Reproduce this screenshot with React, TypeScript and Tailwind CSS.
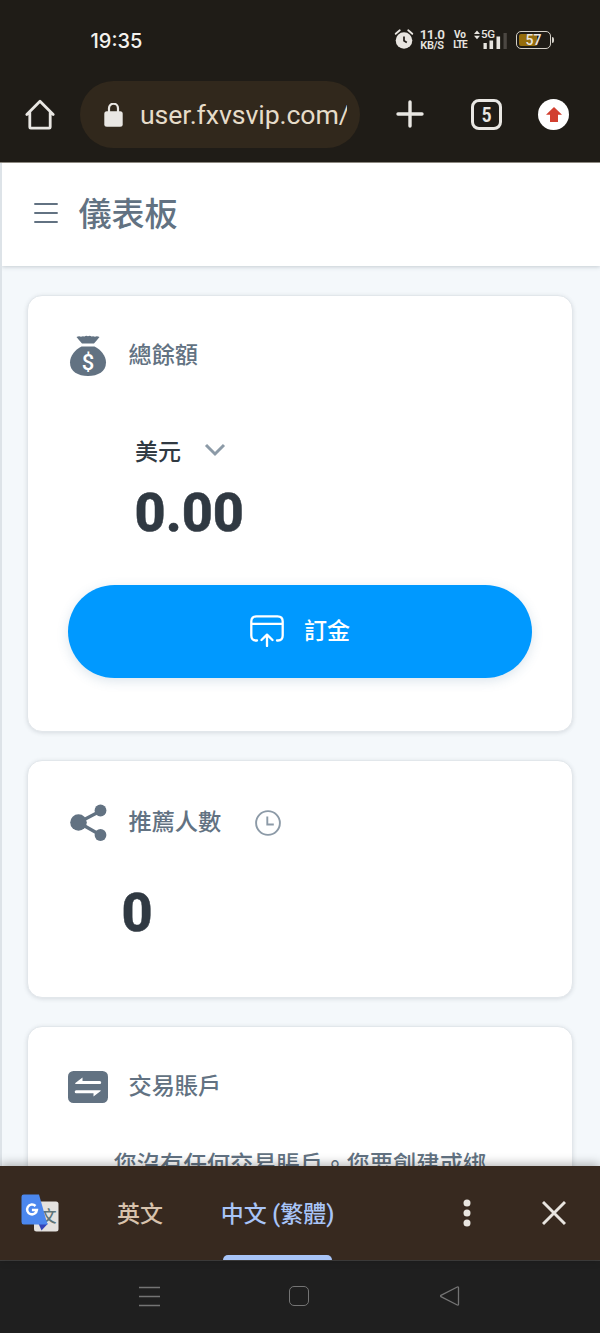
import type { ReactNode } from "react";

const cjk = "font-['Roboto','Noto_Sans_CJK_TC',sans-serif]";

function StatusBar() {
  return (
    <div className="flex h-20 items-center pl-[90.5px] pr-[46px] pt-px font-['Inter',sans-serif] text-[#f4f2ee]">
      <span className="w-[52px] whitespace-nowrap text-[20px] font-medium leading-6">19:35</span>
      <div className="ml-auto flex h-8 items-center text-[#e8e5e0]">
        <svg className="mb-[3px] mr-[6px]" width="20" height="22" viewBox="0 0 20 22" fill="none">
          <circle cx="10" cy="12.5" r="8.3" fill="currentColor" />
          <path d="M1.700 5.800 5.800 2.300M18.300 5.800 14.200 2.300" stroke="currentColor" strokeWidth="1.800" strokeLinecap="round" />
          <path d="M10 8.500v4.200l2.800 1.800" stroke="#211d18" strokeWidth="1.700" />
        </svg>
        <div className="mb-px flex w-[24px] flex-col items-center whitespace-nowrap font-['Roboto',sans-serif] font-semibold">
          <span className="text-[13.500px] leading-[11px] tracking-[-0.600px]">11.0</span>
          <span className="text-[11px] leading-[11px] tracking-[-0.400px]">KB/S</span>
        </div>
        <div className="mb-px ml-[9px] flex w-[14px] flex-col items-center font-['Roboto',sans-serif] font-bold">
          <span className="text-[10px] leading-[10px]">Vo</span>
          <span className="text-[10px] leading-[10px] tracking-[-0.900px]">LTE</span>
        </div>
        <div className="relative mb-px ml-[7px] h-[20px] w-[34px]">
          <svg width="34" height="20" viewBox="0 0 34 20" fill="currentColor">
            <path d="m0 4 3-3.500 3 3.500zM0 5.800h6L3 9.300z" />
            <path d="M9.500 13h3.300v6H9.500zM15.500 10.500h3.600V19h-3.600zM22.500 6.500h3.600V19h-3.600z" />
            <path d="M29.500 3h3.300v16h-3.300z" fill="#4b4742" />
          </svg>
          <span className="absolute left-[7px] top-0 font-['Roboto',sans-serif] text-[11.500px] font-medium leading-[9px] tracking-[-0.400px]">5G</span>
        </div>
        <div className="mb-px ml-[8px] flex items-center">
          <div className="relative flex h-[18px] w-[35px] items-center justify-center overflow-hidden rounded-[5px] border-[1.500px] border-[#d4d0c8]">
            <div className="absolute left-[2px] top-[2px] h-[12px] w-[18px] rounded-[2px] bg-[#946c0c]" />
            <span className="relative font-['Roboto',sans-serif] text-[14px] font-medium leading-[14px]">57</span>
          </div>
          <div className="ml-px h-[6px] w-[2px] rounded-r bg-[#d4d0c8]" />
        </div>
      </div>
    </div>
  );
}

function Toolbar() {
  return (
    <div className="flex h-[82px] items-start pt-px text-[#e9e7e3]">
      <svg className="ml-6 mt-[18px]" width="32" height="32" viewBox="0 0 32 32" fill="none" stroke="currentColor" strokeWidth="2.800" strokeLinejoin="round" strokeLinecap="round">
        <path d="M2.800 15.500 16 2.300l13.200 13.200M5.800 13.500v14.700q0 1 1 1h18.400q1 0 1-1V13.500" />
      </svg>
      <div className="ml-6 flex h-[67px] w-[280px] items-center rounded-full bg-[#31281c] pl-6">
        <svg width="19" height="24" viewBox="0 0 19 24" fill="none">
          <rect x="0.3" y="8.3" width="18.4" height="15.4" rx="2.5" fill="currentColor" />
          <path d="M5 9V5.200a4.500 4.500 0 0 1 9 0V9" stroke="currentColor" strokeWidth="2.200" />
        </svg>
        <span className="ml-[17px] w-[207px] overflow-hidden whitespace-nowrap font-['Roboto',sans-serif] text-[26.700px] leading-9 tracking-[-0.100px] text-[#e6dcc9]">user.fxvsvip.com/</span>
      </div>
      <svg className="ml-[35px] mt-[19px]" width="30" height="28" viewBox="-1 0 30 28" stroke="currentColor" strokeWidth="3.400" strokeLinecap="round">
        <path d="M14 2v24M2 14h24" />
      </svg>
      <div className="ml-[46px] mt-[18px] flex h-[31px] w-[31px] items-center justify-center rounded-[8px] border-[3px] border-current font-['Roboto',sans-serif] text-[20px] font-bold leading-none">
        <span className="scale-x-[.85]">5</span>
      </div>
      <div className="ml-[36px] mt-[18px] flex h-[31px] w-[31px] items-center justify-center rounded-full bg-white">
        <svg width="16" height="15" viewBox="0 0 16 15" fill="#d23f2f">
          <path d="m8 0 8 7.800h-4V15H4V7.800H0z" />
        </svg>
      </div>
    </div>
  );
}

function CardTitle({ icon, children }: { icon: ReactNode; children: ReactNode }) {
  return (
    <div className="flex h-[42px] items-center">
      <div className="flex w-10 justify-center">{icon}</div>
      <span className="mb-[3px] ml-[20.500px] text-[23.200px] font-medium leading-8">{children}</span>
    </div>
  );
}

function Card({ className, children }: { className: string; children: ReactNode }) {
  return (
    <section className={"rounded-[15px] border border-[#e2e7eb] bg-white px-10 shadow-[0_1px_4px_rgba(60,75,90,0.16)] " + className}>
      {children}
    </section>
  );
}

function MoneyBag() {
  return (
    <svg width="38" height="42" viewBox="0 0 38 42" fill="currentColor">
      <path d="M7.500 2q2.500-1.200 4.500-.300 1.500-1 3.500-.200 1.700-1.300 3.500-.200 1.800-1.100 3.500.200 2-.800 3.500.200 2-.900 4.500.300-2.200 2.800-5.500 6.500H13Q9.700 4.800 7.500 2z" />
      <path d="M12.500 11.500h13c6 3 11.500 9 11.500 16C37 36.500 29 41 19 41S1 36.500 1 27.500c0-7 5.500-13 11.500-16z" />
      <text x="19" y="34.500" textAnchor="middle" fontFamily="Roboto" fontWeight="500" fontSize="22" fill="#fff">$</text>
    </svg>
  );
}

function ShareIcon() {
  return (
    <svg width="38" height="38" viewBox="0 0 38 38" fill="currentColor">
      <path d="M31.500 7 9.500 18.500l22 12.500" fill="none" stroke="currentColor" strokeWidth="3.300" />
      <circle cx="9.500" cy="18.500" r="8.300" />
      <circle cx="31.500" cy="6.500" r="5.900" />
      <circle cx="31.500" cy="31" r="5.900" />
    </svg>
  );
}

function TransferIcon() {
  return (
    <svg width="40" height="32" viewBox="0 0 40 32">
      <rect width="40" height="32" rx="5.500" fill="currentColor" />
      <path d="M7 12.300 14.500 6.500v3.500h17.200a1.500 1.500 0 0 1 0 3H8q-1 0-1-.700zM33 19.700 25.500 25.500v-3.200H8.200a1.500 1.500 0 0 1 0-3H32q1 0 1 .400z" fill="#fff" />
    </svg>
  );
}

function TranslateLogo() {
  return (
    <svg width="38" height="38" viewBox="0 0 38 38">
      <rect x="13" y="7.500" width="24.500" height="30" rx="2.500" fill="#e4e2df" />
      <text x="27.800" y="28" textAnchor="middle" fontFamily="Noto Sans CJK TC" fontSize="15.500" fill="#5d7478">文</text>
      <path d="M17.500 29.500h9.500l-6.500 7z" fill="#3445b8" />
      <path d="M2.800.500h15.200L26.500 30.500H2.800Q.500 30.500 .500 28V2.700Q.500.500 2.800.500z" fill="#4b87ee" />
      <path d="M14.500 12a4.900 4.900 0 1 0 1.400 3.900h-5" fill="none" stroke="#fff" strokeWidth="2.500" />
    </svg>
  );
}

export default function App() {
  return (
    <div className={"flex h-[1333px] w-[600px] flex-col overflow-hidden bg-[#1f1c17] text-[#627282] " + cjk}>
      <StatusBar />
      <Toolbar />
      <div className="h-px shrink-0 bg-[#8d8981]" />
      <div className="flex h-[1003px] shrink-0 flex-col overflow-hidden border-l-2 border-[#dde3e8] bg-[#f4f8fb]">
        <header className="flex h-[103px] shrink-0 items-center bg-white pl-8 shadow-[0_1px_4px_rgba(60,75,90,0.25)]">
          <svg className="mb-[3px]" width="24" height="20" viewBox="0 0 24 20" stroke="currentColor" strokeWidth="1.900" strokeLinecap="round">
            <path d="M1 1h22M1 10h22M1 19h22" />
          </svg>
          <h1 className="ml-[20.500px] text-[33px] font-medium leading-[48px]">儀表板</h1>
        </header>
        <main className="flex flex-col gap-[28px] pl-[25px] pr-[27px] pt-[29px]">
          <Card className="h-[437px] pt-[39px]">
            <CardTitle icon={<MoneyBag />}>總餘額</CardTitle>
            <div className="ml-[67px] mt-[60px] flex h-8 items-center text-[#303942]">
              <span className="text-[23px] font-medium leading-8">美元</span>
              <svg className="mb-[7px] ml-[23px]" width="22" height="14" viewBox="0 0 22 14" fill="none" stroke="#8c9aa7" strokeWidth="3">
                <path d="m2 2 9 9 9-9" />
              </svg>
            </div>
            <div className="ml-[66.500px] mt-[12px] text-[54px] font-extrabold leading-[64px] text-[#303942] [-webkit-text-stroke:0.500px_#303942]">0.00</div>
            <button className="mt-[40px] flex h-[93px] w-full items-center justify-center rounded-full bg-[#0099ff] text-white shadow-[0_3px_12px_rgba(60,110,150,0.180)]">
              <svg className="mb-[2px]" width="34" height="32" viewBox="0 0 34 32" fill="none" stroke="currentColor" strokeWidth="2.300" strokeLinecap="round" strokeLinejoin="round">
                <path d="M7 25.500H6Q1.300 25.500 1.300 20.500v-14Q1.300 1.300 6.500 1.300h21q5.200 0 5.200 5.200v14q0 5-4.700 5h-1M1.300 8.800h31.400M17 31V20M11.500 25l5.500-5.300 5.500 5.300" />
              </svg>
              <span className="ml-5 text-[23px] font-medium leading-8">訂金</span>
            </button>
          </Card>
          <Card className="h-[238px] pt-[41px]">
            <div className="flex items-center">
              <CardTitle icon={<ShareIcon />}>推薦人數</CardTitle>
              <svg className="ml-[34px]" width="26" height="26" viewBox="0 0 26 26" fill="none" stroke="#8c9aa7" strokeWidth="1.900">
                <circle cx="13" cy="13" r="11.900" />
                <path d="M12.300 6.500v8h6.500" />
              </svg>
            </div>
            <div className="ml-[53.500px] mt-[37px] text-[54px] font-extrabold leading-[64px] text-[#303942] [-webkit-text-stroke:0.500px_#303942]">0</div>
          </Card>
          <Card className="h-[300px] pt-[39px]">
            <CardTitle icon={<TransferIcon />}>交易賬戶</CardTitle>
            <p className="ml-[45.500px] mt-[41px] whitespace-nowrap text-[23.300px] font-medium leading-8">您沒有任何交易賬戶。您要創建或綁</p>
          </Card>
        </main>
      </div>
      <div className="relative flex h-[94px] shrink-0 items-center bg-[#37291f] text-[23px] font-medium shadow-[0_-2px_10px_rgba(0,0,0,0.300)]">
        <div className="ml-[21px]"><TranslateLogo /></div>
        <span className="ml-[58px] pt-[5px] text-[#d8c3ad]">英文</span>
        <div className="ml-[57px] flex h-full w-[115px] flex-col items-center text-[#a8c4f7]">
          <span className="flex flex-1 items-center whitespace-nowrap pt-[10px]">中文 (繁體)</span>
          <div className="h-[5px] w-[109px] rounded-t-[5px] bg-[#a8c4f7]" />
        </div>
        <svg className="ml-[127.500px]" width="8" height="28" viewBox="0 0 8 28" fill="#e9e5e0">
          <circle cx="4" cy="4" r="3.500" />
          <circle cx="4" cy="14" r="3.500" />
          <circle cx="4" cy="24" r="3.500" />
        </svg>
        <svg className="ml-[71px]" width="24" height="24" viewBox="0 0 24 24" stroke="#e9e5e0" strokeWidth="2.900">
          <path d="m1 1 22 22M23 1 1 23" />
        </svg>
      </div>
      <nav className="flex h-[73px] shrink-0 items-center border-t border-[#403f3e] bg-[#1f1f1f] pb-[2px] pl-[139px] text-[#747474]">
        <svg width="21" height="21" viewBox="0 0 21 21" stroke="currentColor" strokeWidth="1.400">
          <path d="M0 1.500h21M0 10.500h21M0 19.500h21" />
        </svg>
        <div className="ml-[129px] h-[20px] w-[20px] rounded-[5px] border-[1.500px] border-current" />
        <svg className="ml-[131px]" width="20" height="20" viewBox="0 0 20 20" fill="none" stroke="currentColor" strokeWidth="1.300" strokeLinejoin="round">
          <path d="M17.300 1 .900 9.300q-.800.700 0 1.400L17.300 19q1.200.400 1.200-.800V1.800Q18.500.600 17.300 1z" />
        </svg>
      </nav>
    </div>
  );
}
